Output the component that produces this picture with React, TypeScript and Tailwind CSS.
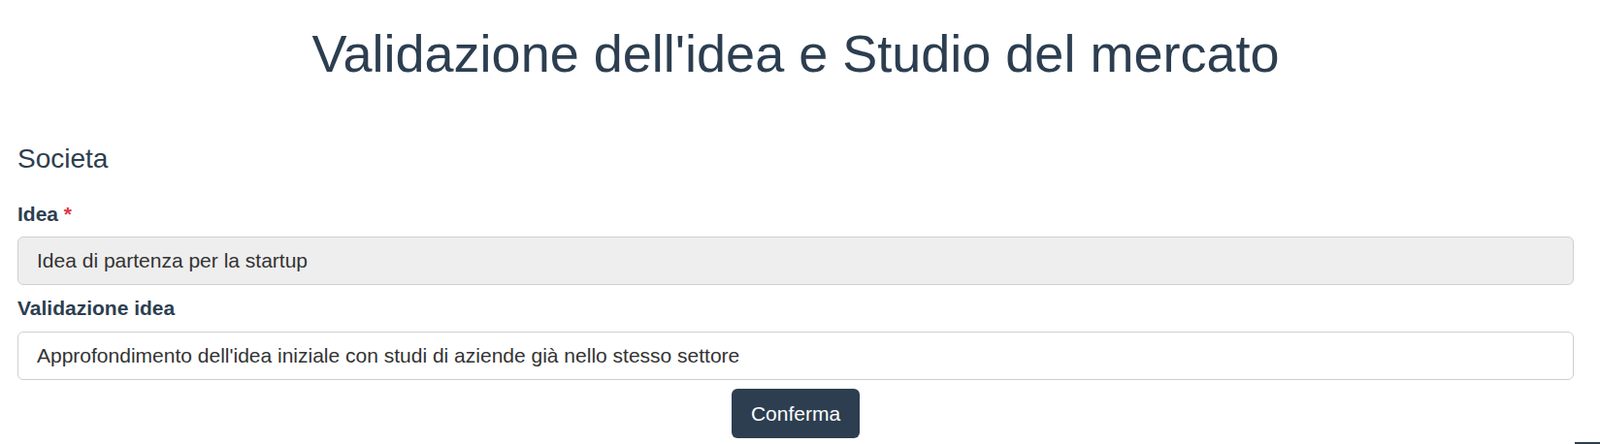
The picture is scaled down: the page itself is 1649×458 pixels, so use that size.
export default function App() {
  return (
    <div className="relative h-[458px] overflow-hidden bg-white text-[#2c3e50]">
      <div className="pl-[18px] pr-[27px] font-['Liberation_Sans',Arial,sans-serif]">
        <h1 className="mt-[23px] text-center text-[54px] leading-[1.2] font-normal text-[#2c3e50]">
          Validazione dell'idea e Studio del mercato
        </h1>

        <h4 className="mt-[59px] text-[28px] leading-[1.2] font-normal text-[#2c3e50]">Societa</h4>

        <form className="mt-[26px]" onSubmit={(e) => e.preventDefault()}>
          <label className="block text-[21px] leading-[1.4] font-bold text-[#2c3e50]">
            Idea <span className="text-[#dc3545]">*</span>
          </label>
          <input
            readOnly
            value="Idea di partenza per la startup"
            className="mt-[8px] block h-[50px] w-full rounded-[6px] border border-[#cfcfcf] bg-[#eeeeee] px-[19px] text-[21px] text-[#333] outline-none"
          />

          <label className="mt-[9px] block text-[21px] leading-[1.4] font-bold text-[#2c3e50]">
            Validazione idea
          </label>
          <input
            defaultValue="Approfondimento dell'idea iniziale con studi di aziende già nello stesso settore"
            className="mt-[10px] block h-[50px] w-full rounded-[6px] border border-[#cfcfcf] bg-white px-[19px] text-[21px] text-[#333] outline-none"
          />

          <div className="mt-[9px] flex justify-center">
            <button
              type="submit"
              className="h-[51px] w-[132px] rounded-[6px] bg-[#2c3e50] text-[21px] text-white"
            >
              Conferma
            </button>
          </div>
        </form>
      </div>

      <div className="absolute left-[1623px] top-[456px] h-[2px] w-[26px] bg-[#2c3e50]" />
    </div>
  );
}
